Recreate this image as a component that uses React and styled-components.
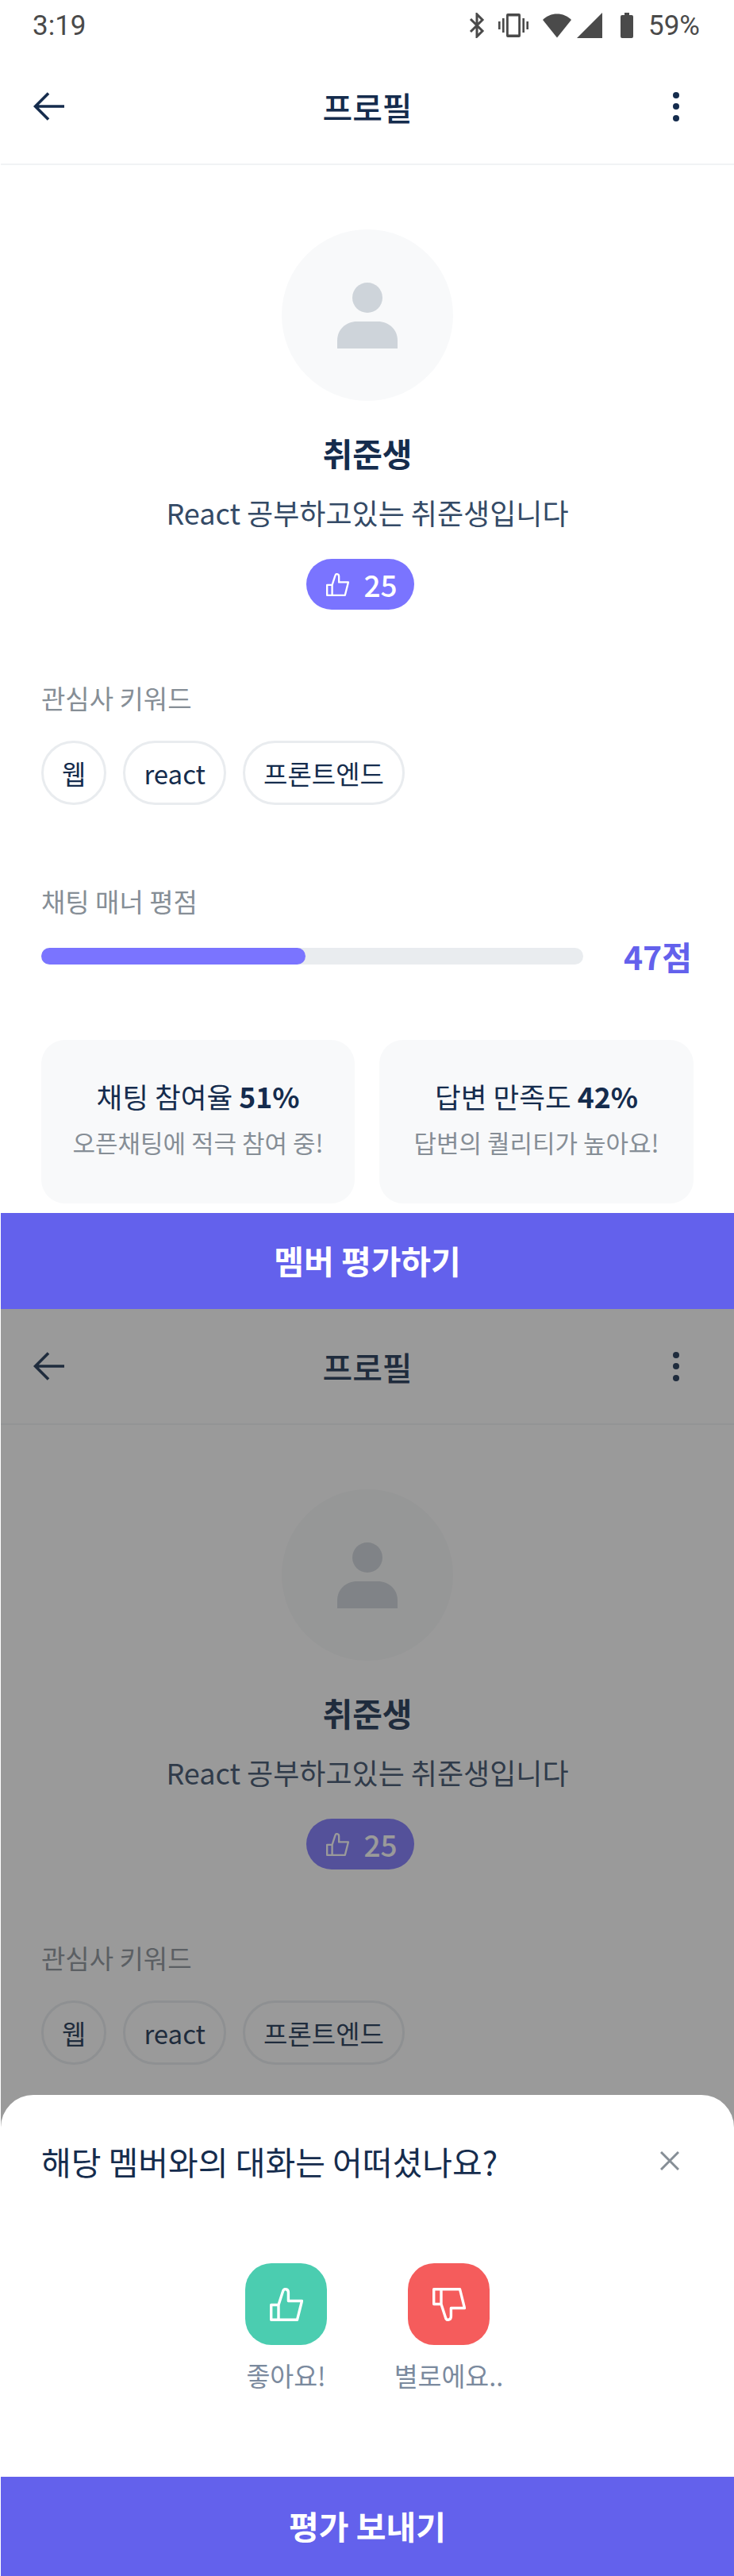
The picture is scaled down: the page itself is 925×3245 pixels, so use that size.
import React from "react";
import styled, { createGlobalStyle } from "styled-components";

// the copy behind the bottom sheet stops at the keywords, the rest is covered anyway
const ProfileBody = ({ covered }) => (
  <>
    <Header>
      <IconSlot>
        <svg width="40" height="36" viewBox="0 0 40 36" fill="none" stroke="#152c4d" strokeWidth="3.6">
          <path d="M39 18H3M19 1.5L2.5 18L19 34.5" />
        </svg>
      </IconSlot>
      <HeaderTitle>프로필</HeaderTitle>
      <IconSlot>
        <Kebab>
          <i />
          <i />
          <i />
        </Kebab>
      </IconSlot>
    </Header>
    <Content>
      <Avatar>
        <svg width="76" height="84" viewBox="0 0 76 84" fill="#ced4da">
          <circle cx="38" cy="20" r="19" />
          <path d="M0 84V74C0 60 11 50 25 50H51C65 50 76 60 76 74V84Z" />
        </svg>
      </Avatar>
      <Name>취준생</Name>
      <Bio>React 공부하고있는 취준생입니다</Bio>
      <LikeBadge>
        <Thumb size={29} color="#fff" />
        <span>25</span>
      </LikeBadge>
      <SectionLabel $top={87}>관심사 키워드</SectionLabel>
      <Tags>
        <Tag>웹</Tag>
        <Tag>react</Tag>
        <Tag>프론트엔드</Tag>
      </Tags>
      {!covered && (
        <>
          <SectionLabel $top={97}>채팅 매너 평점</SectionLabel>
          <ScoreRow>
            <Track>
              <Fill style={{ width: "48.8%" }} />
            </Track>
            <Score>47점</Score>
          </ScoreRow>
          <Cards>
            <Card>
              <CardTitle>
                채팅 참여율 <b>51%</b>
              </CardTitle>
              <CardText>오픈채팅에 적극 참여 중!</CardText>
            </Card>
            <Card>
              <CardTitle>
                답변 만족도 <b>42%</b>
              </CardTitle>
              <CardText>답변의 퀄리티가 높아요!</CardText>
            </Card>
          </Cards>
        </>
      )}
    </Content>
  </>
);

const Thumb = ({ size, color, down }) => (
  <svg width={size} height={size} viewBox="0 0 42 42" fill="none" stroke={color} strokeWidth="3.4" strokeLinejoin="round">
    <g transform={down ? "matrix(1 0 0 -1 0 42)" : undefined}>
      <path d="M11 21.5L16.5 4.5C17.2 2 18.5 1.5 20 1.7C22.3 2 23.4 3.5 23.4 6V16.5H40.5L34.5 40.3H1.7V21.5H11V40" />
    </g>
  </svg>
);

const App = () => (
  <Page>
    <GlobalStyle />
    <StatusBar>
      <span>3:19</span>
      <StatusIcons>
        <svg width="20" height="32" viewBox="0 0 20 32" fill="none" stroke="#4a4a4a" strokeWidth="3">
          <path d="M2 8L17 23L10 30V2L17 9L2 24" />
        </svg>
        <svg style={{ marginLeft: 17 }} width="38" height="32" viewBox="0 0 38 32" fill="#4a4a4a">
          <path d="M0 11h2.6v10H0zM5 7h2.6v18H5zM30.4 7H33v18h-2.6zM35.4 11H38v10h-2.6z" />
          <path fillRule="evenodd" d="M12 1h14a2 2 0 0 1 2 2v26a2 2 0 0 1-2 2H12a2 2 0 0 1-2-2V3a2 2 0 0 1 2-2zm.8 3.5v23h12.4v-23z" />
        </svg>
        <svg style={{ marginLeft: 18 }} width="36" height="32" viewBox="0 0 36 32" fill="#4a4a4a">
          <path d="M0 9C5 4 11 1.5 18 1.5S31 4 36 9L18 31.5Z" />
        </svg>
        <svg style={{ marginLeft: 7 }} width="32" height="32" viewBox="0 0 32 32" fill="#4a4a4a">
          <path d="M32 0V32H0Z" />
        </svg>
        <svg style={{ marginLeft: 23 }} width="16" height="32" viewBox="0 0 16 32" fill="#4a4a4a">
          <path d="M5 0h6v3h3a2 2 0 0 1 2 2v25a2 2 0 0 1-2 2H2a2 2 0 0 1-2-2V5a2 2 0 0 1 2-2h3z" />
        </svg>
        <Battery>59%</Battery>
      </StatusIcons>
    </StatusBar>
    <ProfileBody />
    <ActionButton $height={121} $top={12}>멤버 평가하기</ActionButton>
    <DimFrame>
      <ProfileBody covered />
      <Scrim />
      <Sheet>
        <SheetHead>
          <SheetTitle>해당 멤버와의 대화는 어떠셨나요?</SheetTitle>
          <svg width="24" height="24" viewBox="0 0 24 24" stroke="#868e96" strokeWidth="3">
            <path d="M1 1L23 23M23 1L1 23" />
          </svg>
        </SheetHead>
        <Votes>
          <Vote>
            <VoteIcon $bg="#4bcdb0">
              <Thumb size={42} color="#fff" />
            </VoteIcon>
            <VoteLabel>좋아요!</VoteLabel>
          </Vote>
          <Vote>
            <VoteIcon $bg="#f55c5c">
              <Thumb size={42} color="#fff" down />
            </VoteIcon>
            <VoteLabel>별로에요..</VoteLabel>
          </Vote>
        </Votes>
        <ActionButton $height={125}>평가 보내기</ActionButton>
      </Sheet>
    </DimFrame>
  </Page>
);

export default App;

const GlobalStyle = createGlobalStyle`
  html, body {
    margin: 0;
    padding: 0;
    background: #fff;
  }
  * {
    box-sizing: border-box;
  }
`;

const Page = styled.div`
  width: 925px;
  height: 3245px;
  overflow: hidden;
  padding-left: 1px;
  background: #fff;
  font-family: "Noto Sans CJK KR", "Noto Sans", sans-serif;
  color: #152c4d;
`;

const StatusBar = styled.div`
  height: 62px;
  display: flex;
  align-items: center;
  justify-content: space-between;
  padding: 2px 43px 0 40px;
  font-family: Roboto, sans-serif;
  font-size: 35px;
  color: #4a4a4a;
`;

const StatusIcons = styled.div`
  display: flex;
  align-items: center;
`;

const Battery = styled.span`
  margin-left: 19px;
`;

const Header = styled.div`
  height: 146px;
  display: flex;
  align-items: center;
  justify-content: space-between;
  padding: 0 41px;
  border-bottom: 2px solid #f1f3f5;
`;

const IconSlot = styled.div`
  width: 40px;
  display: flex;
  justify-content: center;
`;

const HeaderTitle = styled.div`
  font-size: 41px;
  font-weight: 500;
`;

const Kebab = styled.div`
  display: flex;
  flex-direction: column;
  gap: 6.5px;
  margin-right: 24px;

  i {
    display: block;
    width: 8px;
    height: 8px;
    border-radius: 50%;
    background: #152c4d;
  }
`;

const Content = styled.div`
  display: flex;
  flex-direction: column;
  align-items: center;
  padding: 81px 51px 0;
`;

const Avatar = styled.div`
  width: 216px;
  height: 216px;
  border-radius: 50%;
  background: #f8f9fa;
  display: flex;
  align-items: center;
  justify-content: center;
`;

const Name = styled.div`
  margin-top: 35px;
  font-size: 41px;
  line-height: 60px;
  font-weight: 700;
`;

const Bio = styled.div`
  margin-top: 18px;
  font-size: 36px;
  line-height: 54px;
  color: #344a66;
`;

const LikeBadge = styled.div`
  margin: 32px 18px 0 0;
  width: 136px;
  height: 64px;
  padding-left: 4px;
  border-radius: 32px;
  background: #7a74ff;
  color: #fff;
  font-size: 37px;
  font-weight: 500;
  display: flex;
  align-items: center;
  justify-content: center;
  gap: 18px;
`;

const SectionLabel = styled.div`
  align-self: flex-start;
  margin-top: ${(p) => p.$top}px;
  font-size: 33px;
  line-height: 48px;
  color: #868e96;
`;

const Tags = styled.div`
  align-self: flex-start;
  margin-top: 30px;
  display: flex;
  gap: 21px;
`;

const Tag = styled.div`
  height: 81px;
  padding: 0 23px;
  border: 3px solid #e9ecef;
  border-radius: 41px;
  font-size: 33px;
  display: flex;
  align-items: center;
`;

const ScoreRow = styled.div`
  align-self: stretch;
  margin-top: 15px;
  height: 60px;
  display: flex;
  align-items: center;
  justify-content: space-between;
`;

const Track = styled.div`
  width: 683px;
  height: 21px;
  border-radius: 11px;
  background: #e9ecef;
`;

const Fill = styled.div`
  height: 100%;
  border-radius: 11px;
  background: #7a74ff;
`;

const Score = styled.div`
  font-size: 41px;
  font-weight: 700;
  color: #6361ec;
  padding-right: 2px;
`;

const Cards = styled.div`
  align-self: stretch;
  margin-top: 76px;
  display: grid;
  grid-template-columns: 395px 396px;
  justify-content: space-between;
`;

const Card = styled.div`
  height: 206px;
  border-radius: 30px;
  background: #f8f9fa;
  display: flex;
  flex-direction: column;
  align-items: center;
  padding-top: 44px;
`;

const CardTitle = styled.div`
  font-size: 35.6px;
  line-height: 54px;

  b {
    font-weight: 700;
  }
`;

const CardText = styled.div`
  margin-top: 8px;
  font-size: 31px;
  line-height: 46px;
  color: #868e96;
`;

const ActionButton = styled.div`
  margin-top: ${(p) => p.$top || 0}px;
  height: ${(p) => p.$height}px;
  padding-bottom: 4px;
  background: #6361ec;
  color: #fff;
  font-size: 41px;
  font-weight: 700;
  display: flex;
  align-items: center;
  justify-content: center;
`;

const DimFrame = styled.div`
  position: relative;
  height: 1596px;
  overflow: hidden;
`;

const Scrim = styled.div`
  position: absolute;
  inset: 0;
  background: rgba(43, 43, 43, 0.48);
`;

const Sheet = styled.div`
  position: absolute;
  left: 0;
  right: 0;
  bottom: 0;
  height: 606px;
  background: #fff;
  border-radius: 41px 41px 0 0;
  display: flex;
  flex-direction: column;
`;

const SheetHead = styled.div`
  height: 166px;
  display: flex;
  align-items: center;
  justify-content: space-between;
  padding: 0 69px 0 51px;
`;

const SheetTitle = styled.div`
  font-size: 41px;
`;

const Votes = styled.div`
  margin-top: 46px;
  flex: 1;
  display: flex;
  justify-content: center;
  gap: 68px;
`;

const Vote = styled.div`
  width: 137px;
  display: flex;
  flex-direction: column;
  align-items: center;
`;

const VoteIcon = styled.div`
  width: 103px;
  height: 103px;
  border-radius: 33px;
  background: ${(p) => p.$bg};
  display: flex;
  align-items: center;
  justify-content: center;
`;

const VoteLabel = styled.div`
  margin-top: 15px;
  font-size: 32.5px;
  line-height: 46px;
  white-space: nowrap;
  color: #7b8a9e;
`;
